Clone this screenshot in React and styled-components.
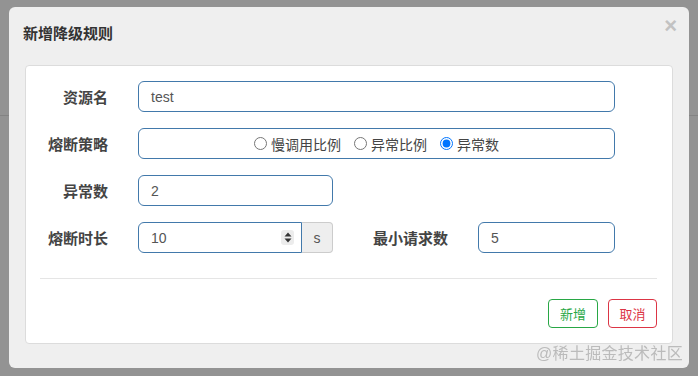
import React from 'react';
import styled, { createGlobalStyle } from 'styled-components';

const GlobalStyle = createGlobalStyle`
  html, body {
    margin: 0;
    padding: 0;
    background: #939393;
    font-family: "Liberation Sans", "Noto Sans CJK SC", sans-serif;
  }
  * { box-sizing: border-box; }
`;

const Backdrop = styled.div`
  position: fixed;
  inset: 0;
  background: #939393;
`;

const BackdropHeader = styled.div`
  height: 116px;
  border-bottom: 1px solid #838383;
`;

const Overlay = styled.div`
  position: fixed;
  inset: 0;
  padding: 7px 9px;
`;

const Modal = styled.div`
  position: relative;
  width: 680px;
  background: #efefef;
  border-radius: 6px;
  padding: 0 16px 24px 16px;
`;

const Header = styled.div`
  padding: 16px 0 21px 0;
  margin-left: -2px;
`;

const Title = styled.h4`
  margin: 0;
  font-size: 15px;
  line-height: 21px;
  font-weight: bold;
  color: #333;
`;

const Close = styled.span`
  position: absolute;
  top: 8px;
  right: 12px;
  font-size: 22px;
  font-weight: bold;
  line-height: 1;
  color: #c2c2c2;
`;

const Card = styled.div`
  background: #fff;
  border: 1px solid #dcdcdc;
  border-radius: 4px;
  padding: 15px 15px 15px 14px;
`;

const Form = styled.div`
  display: flex;
  flex-direction: column;
  gap: 16px;
`;

const Row = styled.div`
  display: flex;
  align-items: center;
`;

const Label = styled.label`
  width: ${p => p.$width || 68}px;
  margin-right: 30px;
  text-align: right;
  font-size: 15px;
  font-weight: bold;
  color: #444;
  white-space: nowrap;
`;

const Field = styled.div`
  width: ${p => p.$width}px;
  height: 31px;
  display: flex;
  align-items: center;
  justify-content: ${p => (p.$center ? 'center' : 'flex-start')};
  gap: 13px;
  padding: 0 12px;
  border: 1px solid #4279ab;
  border-radius: ${p => (p.$joined ? '6px 0 0 6px' : '6px')};
  background: #fff;
  font-size: 14px;
  color: #555;
`;

const Value = styled.span`
  flex: 1;
`;

const Spinner = styled.span`
  display: flex;
  align-items: center;
  justify-content: center;
  width: 13px;
  height: 15px;
  margin-right: -5px;
  border-radius: 3px;
  background: #ececec;
`;

const Addon = styled.span`
  width: 31px;
  height: 31px;
  display: flex;
  align-items: center;
  justify-content: center;
  background: #eee;
  border: 1px solid #ccc;
  border-left: none;
  border-radius: 0 4px 4px 0;
  font-size: 14px;
  color: #555;
`;

const Group = styled.div`
  display: flex;
  width: 195px;
`;

const RadioOption = styled.label`
  display: flex;
  align-items: center;
  gap: 4px;
  font-size: 14px;
  color: #444;
`;

const Radio = styled.input`
  margin: 0;
  width: 13px;
  height: 13px;
  accent-color: #0075ff;
`;

const Divider = styled.hr`
  margin: 25px 0 20px 0;
  border: none;
  border-top: 1px solid #e5e5e5;
`;

const Footer = styled.div`
  display: flex;
  justify-content: flex-end;
  gap: 10px;
`;

const Button = styled.button`
  width: ${p => p.$width || 50}px;
  height: 29px;
  padding: 0;
  background: #fff;
  border: 1px solid ${p => p.$color};
  color: ${p => p.$color};
  border-radius: 4px;
  font-family: inherit;
  font-size: 13px;
`;

const Watermark = styled.span`
  position: fixed;
  right: 15px;
  bottom: 12px;
  font-size: 16px;
  color: rgba(170, 170, 170, 0.75);
  letter-spacing: 0.3px;
`;

const SpinIcon = () => (
  <svg width="8" height="11" viewBox="0 0 8 11">
    <path d="M4 0.5 L7.5 4.5 L0.5 4.5 Z" fill="#333" />
    <path d="M4 10.5 L7.5 6.5 L0.5 6.5 Z" fill="#333" />
  </svg>
);

export default function App() {
  return (
    <>
      <GlobalStyle />
      <Backdrop>
        <BackdropHeader />
      </Backdrop>
      <Overlay>
        <Modal>
          <Close>×</Close>
          <Header>
            <Title>新增降级规则</Title>
          </Header>
          <Card>
            <Form>
              <Row>
                <Label>资源名</Label>
                <Field $width={477}>test</Field>
              </Row>
              <Row>
                <Label>熔断策略</Label>
                <Field $width={477} $center>
                  <RadioOption>
                    <Radio type="radio" name="grade" readOnly /> 慢调用比例
                  </RadioOption>
                  <RadioOption>
                    <Radio type="radio" name="grade" readOnly /> 异常比例
                  </RadioOption>
                  <RadioOption>
                    <Radio type="radio" name="grade" defaultChecked /> 异常数
                  </RadioOption>
                </Field>
              </Row>
              <Row>
                <Label>异常数</Label>
                <Field $width={195}>2</Field>
              </Row>
              <Row>
                <Label>熔断时长</Label>
                <Group>
                  <Field $width={164} $joined>
                    <Value>10</Value>
                    <Spinner><SpinIcon /></Spinner>
                  </Field>
                  <Addon>s</Addon>
                </Group>
                <Label $width={115}>最小请求数</Label>
                <Field $width={137}>5</Field>
              </Row>
            </Form>
            <Divider />
            <Footer>
              <Button $color="#28a745">新增</Button>
              <Button $color="#dc3545" $width={49}>取消</Button>
            </Footer>
          </Card>
        </Modal>
      </Overlay>
      <Watermark>@稀土掘金技术社区</Watermark>
    </>
  );
}
